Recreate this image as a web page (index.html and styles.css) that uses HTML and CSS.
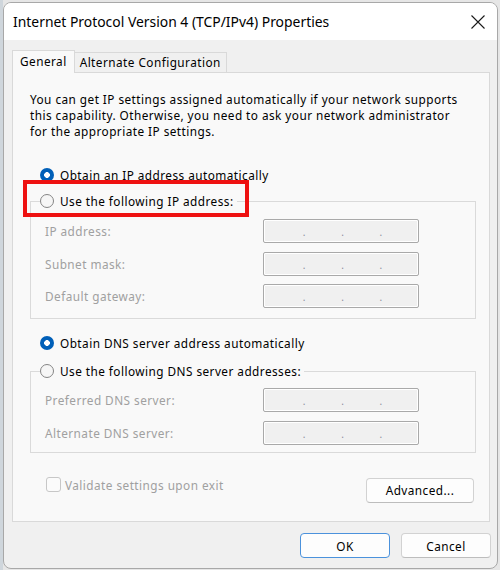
FILE: index.html
```html
<!DOCTYPE html>
<html>
<head>
<meta charset="utf-8">
<link rel="stylesheet" href="styles.css">
</head>
<body>
<div class="desktop">
  <div class="window">
    <div class="titlebar">
      <span class="title">Internet Protocol Version 4 (TCP/IPv4) Properties</span>
      <svg class="close" width="14" height="14" viewBox="0 0 14 14"><path d="M0.5 0.5 L13.5 13.5 M13.5 0.5 L0.5 13.5" stroke="#1a1a1a" stroke-width="1.1" fill="none"/></svg>
    </div>
    <div class="body">
      <div class="tabs">
        <div class="tab active">General</div>
        <div class="tab">Alternate Configuration</div>
      </div>
      <div class="panel">
        <p class="intro">You can get IP settings assigned automatically if your network supports<br>this capability. Otherwise, you need to ask your network administrator<br>for the appropriate IP settings.</p>
        <div class="radio-row"><span class="radio checked"></span>Obtain an IP address automatically</div>
        <fieldset class="group ip-group">
          <legend><span class="radio-row"><span class="radio"></span>Use the following IP address:</span></legend>
          <div class="field"><span class="label">IP address:</span><span class="ipbox"><i></i><b>.</b><i></i><b>.</b><i></i><b>.</b><i></i></span></div>
          <div class="field"><span class="label">Subnet mask:</span><span class="ipbox"><i></i><b>.</b><i></i><b>.</b><i></i><b>.</b><i></i></span></div>
          <div class="field"><span class="label">Default gateway:</span><span class="ipbox"><i></i><b>.</b><i></i><b>.</b><i></i><b>.</b><i></i></span></div>
        </fieldset>
        <div class="radio-row dns-auto"><span class="radio checked"></span>Obtain DNS server address automatically</div>
        <fieldset class="group dns-group">
          <legend><span class="radio-row"><span class="radio"></span>Use the following DNS server addresses:</span></legend>
          <div class="field"><span class="label">Preferred DNS server:</span><span class="ipbox"><i></i><b>.</b><i></i><b>.</b><i></i><b>.</b><i></i></span></div>
          <div class="field"><span class="label">Alternate DNS server:</span><span class="ipbox"><i></i><b>.</b><i></i><b>.</b><i></i><b>.</b><i></i></span></div>
        </fieldset>
        <div class="bottom-row">
          <div class="check-row"><span class="checkbox"></span>Validate settings upon exit</div>
          <button class="btn advanced">Advanced...</button>
        </div>
        <div class="highlight"></div>
      </div>
      <div class="footer">
        <button class="btn ok">OK</button>
        <button class="btn">Cancel</button>
      </div>
    </div>
  </div>
</div>
</body>
</html>
```

FILE: styles.css
```css
* { box-sizing: border-box; }
html, body { margin: 0; padding: 0; }
body {
  background: #d8d8d8;
  font-family: "Noto Sans", "Open Sans", sans-serif;
  font-size: 11.8px;
  letter-spacing: 0.45px;
  color: #000;
}
.desktop {
  width: 500px;
  height: 570px;
  padding: 2px 2px 1px 3px;
  background: linear-gradient(to right, #cfd6dc 0, #cfd6dc 3px, #e6e6e6 3px);
}
.window {
  width: 495px;
  height: 567px;
  border: 1px solid #a8a8a8;
  border-radius: 8px;
  background: #f0f0f0;
  overflow: hidden;
  display: flex;
  flex-direction: column;
}
.titlebar {
  height: 37px;
  background: #fff;
  display: flex;
  align-items: center;
  justify-content: space-between;
  padding: 0 12px 0 9px;
  flex: none;
}
.title {
  font-size: 13.9px;
  letter-spacing: 0;
  color: #000;
}
.close { display: block; margin-top: 1px; }
.body {
  padding: 10px 7px 0 8px;
  display: flex;
  flex-direction: column;
}
.tabs {
  display: flex;
  align-items: flex-end;
  height: 22px;
}
.tab {
  height: 20px;
  padding: 0 5px;
  border: 1px solid #d9d9d9;
  border-bottom: none;
  background: #f0f0f0;
  line-height: 19px;
  margin-left: -1px;
}
.tab.active {
  height: 23px;
  margin-left: 0;
  margin-bottom: -1px;
  background: #f9f9f9;
  position: relative;
  z-index: 1;
  padding: 0 7px;
  line-height: 21px;
  border-color: #d9d9d9;
}
.panel {
  position: relative;
  width: 478px;
  height: 450px;
  border: 1px solid #d9d9d9;
  background: #f9f9f9;
  padding: 18px 0 0 17px;
}
.intro {
  margin: 0;
  line-height: 16px;
}
.radio-row {
  display: flex;
  align-items: center;
  height: 20px;
  white-space: nowrap;
}
.panel > .radio-row { margin-left: 10px; margin-top: 26px; }
.radio {
  width: 14px;
  height: 14px;
  border-radius: 50%;
  border: 1px solid #858585;
  background: #f6f6f6;
  margin-right: 6px;
  flex: none;
}
.radio.checked {
  border: none;
  background: radial-gradient(circle, #fff 0 2.6px, #005fb8 3.1px);
}
.group {
  width: 446px;
  margin: 6px 0 0 0;
  padding: 8px 0 10px 0;
  border: 1px solid #dadada;
  min-width: 0;
}
.group legend {
  padding: 0 3px 0 0;
  margin-left: 9px;
}
.field {
  display: flex;
  align-items: center;
  height: 24px;
  margin-bottom: 8.5px;
  padding-left: 14px;
  color: #a0a0a0;
}
.field:last-child { margin-bottom: 0; }
.label { width: 218px; }
.ipbox {
  width: 156px;
  height: 24px;
  border: 1px solid #a9a9a9;
  box-shadow: inset 0 0 0 1px #fff;
  border-radius: 2px;
  background: #f0f0f0;
  display: grid;
  grid-template-columns: 1fr auto 1fr auto 1fr auto 1fr;
  align-items: end;
  padding: 0 0 5px 3px;
}
.ipbox b {
  font-weight: normal;
  color: #8c8c9c;
  font-size: 10px;
  line-height: 10px;
  letter-spacing: 0;
}
.dns-auto { margin-top: 14px !important; }
.dns-group { margin-top: 8px; padding-top: 7px; padding-bottom: 7px; }
.bottom-row {
  display: flex;
  justify-content: space-between;
  align-items: flex-start;
  margin-top: 22px;
  padding-right: 15px;
}
.check-row {
  display: flex;
  align-items: center;
  margin-left: 16px;
  color: #a0a0a0;
  height: 20px;
}
.checkbox {
  width: 15px;
  height: 15px;
  border: 1px solid #c7c7c7;
  border-radius: 3px;
  background: #fbfbfb;
  margin-right: 4px;
}
.btn {
  font-family: inherit;
  font-size: 11.8px;
  letter-spacing: 0.45px;
  color: #000;
  background: #fdfdfd;
  border: 1px solid #d2d2d2;
  border-bottom-color: #bdbdbd;
  border-radius: 4px;
  height: 25px;
  padding: 0;
}
.advanced { width: 108px; margin-top: 3px; }
.footer {
  display: flex;
  justify-content: flex-end;
  gap: 11px;
  margin-top: 11px;
  margin-right: -1px;
}
.footer .btn { width: 90px; }
.btn.ok { border: 1px solid #4b92dc; }
.highlight {
  position: absolute;
  left: 10px;
  top: 107px;
  width: 226px;
  height: 37px;
  border: 4px solid #ee1111;
}
```
